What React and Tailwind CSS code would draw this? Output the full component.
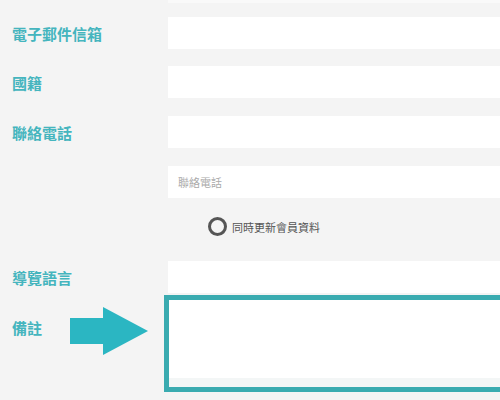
import React from "react";

const FONT = { fontFamily: "'Noto Sans CJK TC', 'Noto Sans', sans-serif" };

function Label({ children }) {
  return (
    <div className="pl-3 text-[15px] font-bold text-[#45b5be] leading-none">{children}</div>
  );
}

function Field({ placeholder }) {
  return (
    <div className="h-8 bg-white flex items-center pl-[10px] text-[11px] text-[#aaaaaa]">
      {placeholder}
    </div>
  );
}

export default function App() {
  return (
    <div className="w-[500px] h-[400px] overflow-hidden bg-[#f4f4f4]" style={FONT}>
      <div className="h-[3px] ml-[168px] bg-[#f9f9f9]" />
      <div className="mt-[14px] grid grid-cols-[168px_1fr] items-center">
        <Label>電子郵件信箱</Label>
        <Field />
      </div>
      <div className="mt-[17px] grid grid-cols-[168px_1fr] items-center">
        <Label>國籍</Label>
        <Field />
      </div>
      <div className="mt-[18px] grid grid-cols-[168px_1fr] items-center">
        <Label>聯絡電話</Label>
        <Field />
      </div>
      <div className="mt-[18px] grid grid-cols-[168px_1fr] items-center">
        <div />
        <Field placeholder="聯絡電話" />
      </div>
      <div className="mt-[19px] pl-[208px] flex items-center gap-[5px] h-[18px]">
        <span className="w-[19px] h-[19px] rounded-full border-[3px] border-[#555555]" />
        <span className="text-[11px] text-[#555555] mt-[3px]">同時更新會員資料</span>
      </div>
      <div className="mt-[26px] grid grid-cols-[168px_1fr] items-center">
        <Label>導覽語言</Label>
        <Field />
      </div>
      <div className="mt-[2px] grid grid-cols-[168px_1fr]">
        <div className="h-[97px] pt-[25px] relative">
          <Label>備註</Label>
          <svg className="absolute left-[70px] top-[12px]" width="79" height="49" viewBox="0 0 79 49">
            <polygon points="0,11 33,11 33,0 78,24 33,48 33,37 0,37" fill="#2bb6c2" />
          </svg>
        </div>
        <div className="-ml-1 h-[97px] border-[5px] border-r-0 border-[#3aabb0] bg-white flex flex-col">
          <div className="flex-1 bg-white" />
          <div className="h-[9px] bg-[#f3f6f6]" />
        </div>
      </div>
    </div>
  );
}
